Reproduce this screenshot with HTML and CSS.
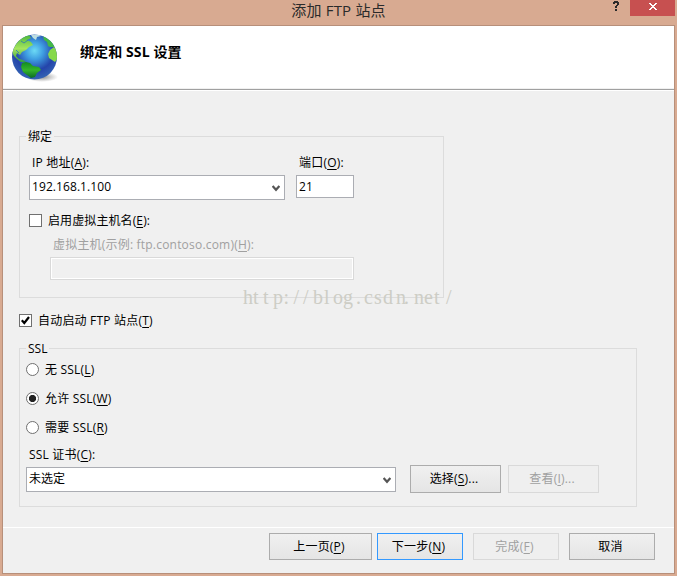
FILE: index.html
```html
<!DOCTYPE html>
<html lang="zh-CN">
<head>
<meta charset="utf-8">
<title>添加 FTP 站点</title>
<link rel="stylesheet" href="styles.css">
</head>
<body>
<div class="window">
  <header class="titlebar">
    <span class="title">添加 FTP 站点</span>
    <div class="caption">
      <svg class="help" width="8" height="12" viewBox="0 0 8 12" shape-rendering="crispEdges"><path fill="#2a2a2a" d="M1 0H5V1H6V4H5V5H4V7H2V5H3V4H4V2H2V3H0V1H1ZM2 8H4V10H2Z"/></svg>
      <span class="close"><svg width="8" height="7" viewBox="0 0 8 7" shape-rendering="crispEdges"><path fill="#fff" d="M0 0H2V1H3V2H5V1H6V0H8V1H7V2H6V3H5V4H6V5H7V6H8V7H6V6H5V5H3V6H2V7H0V6H1V5H2V4H3V3H2V2H1V1H0Z"/></svg></span>
    </div>
  </header>
  <main class="client">
    <section class="banner">
      <svg class="globe" width="50" height="50" viewBox="0 0 50 50">
        <defs>
          <radialGradient id="sea" cx="50%" cy="36%" r="64%"><stop offset="0" stop-color="#6cdaf5"/><stop offset=".3" stop-color="#3f9fe2"/><stop offset=".68" stop-color="#2444aa"/><stop offset="1" stop-color="#3464b4"/></radialGradient>
          <linearGradient id="north" x1="0" y1="0" x2="0" y2="1"><stop offset="0" stop-color="#4cb83c"/><stop offset=".5" stop-color="#a5e45e"/><stop offset="1" stop-color="#35a040"/></linearGradient>
          <linearGradient id="south" x1="0" y1="0" x2="0" y2="1"><stop offset="0" stop-color="#128a20"/><stop offset=".5" stop-color="#35b52b"/><stop offset="1" stop-color="#0a6a25"/></linearGradient>
          <radialGradient id="shade"><stop offset="0" stop-color="#555" stop-opacity=".7"/><stop offset="1" stop-color="#777" stop-opacity="0"/></radialGradient>
          <clipPath id="disc"><circle cx="23.5" cy="24" r="22.5"/></clipPath>
        </defs>
        <ellipse cx="31" cy="44" rx="16" ry="5" fill="url(#shade)"/>
        <circle cx="23.5" cy="24" r="22.5" fill="url(#sea)"/>
        <g clip-path="url(#disc)">
          <path fill="url(#north)" d="M1 19L4 12L11 4L18 2L20 5L16 7L20 9L22 12L18 14L15 17L11 19L9 22L6 20L5 23L8 26L12 27L15 29L10 29L6 26L3 23Z"/>
          <path fill="url(#south)" d="M11 30L15 29L19 30L22 33L28 34L30 37L26 40L24 44L20 45L16 42L12 39L10 34Z"/>
          <path fill="#43b846" d="M32 3L37 5L41 9L44 14L39 14L37 13L36 9L33 7Z"/>
          <path fill="#86d94b" d="M39 17L43 14L46 18L47 25L44 29L41 27L38 25L37 21Z"/>
          <path fill="#d5f1e5" opacity=".85" d="M20 2L28 1L30 3L26 4L25 7L22 5Z"/>
          <path fill="none" stroke="#2b76b8" stroke-width=".8" d="M10 8L13 10L17 7M5 17L8 20"/>
        </g>
      </svg>
      <h1>绑定和 SSL 设置</h1>
    </section>
    <section class="page">
      <div class="group binding">
        <div class="legend">绑定</div>
        <div class="address">
          <label class="ip-label">IP 地址(<u>A</u>):</label>
          <label class="port-label">端口(<u>O</u>):</label>
          <div class="combo"><span class="digits">192.168.1.100</span><svg class="arrow" width="8" height="7" viewBox="0 0 8 7"><path fill="none" stroke="#555" stroke-width="2.2" d="M.6 1L4 4.8L7.4 1"/></svg></div>
          <div class="field"><span class="digits">21</span></div>
        </div>
        <div class="check host"><span class="box"></span><span class="t-host">启用虚拟主机名(<u>E</u>):</span></div>
        <div class="hint">虚拟主机(示例: ftp.contoso.com)(<u>H</u>):</div>
        <div class="field disabled"></div>
        <svg class="watermark" width="214" height="24" viewBox="0 0 214 24"><text y="17" x="0 10 20 30 40.5 50.5 60 70 81 90 100 113 121 131 140 153 161 171 181 191 203">http://blog.csdn.net/</text></svg>
      </div>
      <div class="check auto"><span class="box"><svg width="11" height="11" viewBox="0 0 11 11"><path d="M1.8 5.2L4.3 8L9 2" fill="none" stroke="#000" stroke-width="2.2"/></svg></span><span class="t-auto">自动启动 FTP 站点(<u>T</u>)</span></div>
      <div class="group ssl">
        <div class="legend">SSL</div>
        <div class="radio"><span class="dot"></span><span>无 SSL(<u>L</u>)</span></div>
        <div class="radio on"><span class="dot"></span><span>允许 SSL(<u>W</u>)</span></div>
        <div class="radio"><span class="dot"></span><span>需要 SSL(<u>R</u>)</span></div>
        <label class="cert-label">SSL 证书(<u>C</u>):</label>
        <div class="cert">
          <div class="combo"><span class="value">未选定</span><svg class="arrow" width="8" height="7" viewBox="0 0 8 7"><path fill="none" stroke="#555" stroke-width="2.2" d="M.6 1L4 4.8L7.4 1"/></svg></div>
          <div class="button pick">选择(<u>S</u>)...</div>
          <div class="button off">查看(<u>I</u>)...</div>
        </div>
      </div>
    </section>
    <footer class="actions">
      <div class="button prev">上一页(<u>P</u>)</div>
      <div class="button next">下一步(<u>N</u>)</div>
      <div class="button off">完成(<u>F</u>)</div>
      <div class="button">取消</div>
    </footer>
  </main>
</div>
</body>
</html>
```
FILE: styles.css
```css
* { box-sizing: border-box; }
body { margin: 0; background: #d8aa91; color: #000; font: 12px/16px "Open Sans", "Noto Sans CJK SC", sans-serif; letter-spacing: 0.2px; }
u { text-underline-offset: 2px; text-decoration-thickness: 1px; text-decoration-skip-ink: none; }
svg { display: block; flex: none; }
.window { width: 677px; height: 576px; overflow: hidden; display: flex; flex-direction: column; padding: 0 2px; }
.titlebar { height: 25px; flex: none; display: grid; grid-template-columns: 1fr auto; }
.title { grid-area: 1 / 1 / 2 / 3; justify-self: center; font-size: 15px; line-height: 20px; letter-spacing: 0.2px; color: #2a2a2a; }
.caption { grid-area: 1 / 2; display: flex; align-items: flex-start; gap: 9px; }
.help { margin-top: 1px; }
.close { width: 45px; height: 16px; background: #c75050; display: flex; justify-content: center; padding-top: 3px; }
.client { height: 549px; flex: none; border: 1px solid #b78f7a; background: #f0f0f0; display: flex; flex-direction: column; }
.banner { height: 62px; flex: none; background: #fff; display: flex; padding: 7px 0 0 8px; }
.banner h1 { margin: 10px 0 0 19px; font-size: 14px; line-height: 18px; font-weight: 700; letter-spacing: 0.1px; white-space: nowrap; }
.page { height: 439px; flex: none; margin-top: 1px; border-top: 1px solid #a0a0a0; border-bottom: 1px solid #fff; padding: 46px 0 0 16px; box-shadow: inset 0 1px #fff; }
.group { border: 1px solid #dcdcdc; display: flex; flex-direction: column; }
.binding { width: 425px; height: 162px; position: relative; }
.legend { align-self: flex-start; height: 16px; margin: -8px 0 0 6px; padding: 0 2px; background: #f0f0f0; letter-spacing: 0; }
.address { display: grid; grid-template-columns: 256px 58px; column-gap: 11px; align-items: start; margin: 10px 0 0 9px; }
.address label { height: 20px; padding-left: 3px; }
.combo, .field { border: 1px solid #abadb3; background: #fff; height: 25px; padding: 0 4px 2px 2px; display: flex; align-items: center; justify-content: space-between; }
.field { height: 23px; padding-bottom: 0; }
.arrow { margin-top: 3px; }
.digits { letter-spacing: 0.08px; }
.value { letter-spacing: 0; }
.check { display: flex; align-items: center; gap: 6px; height: 16px; }
.box { width: 13px; height: 13px; margin-bottom: 2px; border: 1px solid #707070; background: #fff; }
.host { margin: 13px 0 0 9px; letter-spacing: 0.1px; }
.hint { margin: 8px 0 0 33px; color: #a0a0a0; height: 16px; }
.disabled { width: 304px; margin: 4px 0 0 30px; background: #f0f0f0; border-color: #d9d9d9; box-shadow: inset 0 0 0 1px #fff; }
.watermark { position: absolute; left: 223px; top: 150px; letter-spacing: 0; }
.watermark text { font: 20px "Liberation Serif", serif; fill: #cdcdc5; }
.auto { margin: 15px 0 0; }
.ssl { width: 618px; height: 159px; margin-top: 19px; }
.radio { display: flex; align-items: center; gap: 6px; height: 16px; margin: 5px 0 8px 6px; }
.dot { width: 13px; height: 13px; margin-bottom: 2px; border: 1px solid #707070; border-radius: 50%; background: #fff; }
.on .dot { background: radial-gradient(circle, #222 3.2px, #fff 4px); }
.ssl .radio + .radio { margin-top: 5px; }
.cert-label { margin: 3px 0 0 9px; height: 16px; }
.cert { display: flex; margin: 2px 0 0 6px; }
.cert .combo { width: 370px; margin-top: 2px; }
.button { width: 91px; height: 28px; border: 1px solid #acacac; background: linear-gradient(#f0f0f0, #e5e5e5); display: flex; align-items: center; justify-content: center; white-space: pre; padding-right: 3px; }
.pick { margin: 0 7px 0 14px; }
.off { color: #a0a0a0; border-color: #d9d9d9; background: #efefef; }
.actions { display: flex; padding: 5px 0 0 266px; }
.actions .button { width: 86px; height: 27px; margin-right: 10px; }
.actions .prev { width: 103px; margin-right: 5px; }
.actions .next { border-color: #3399ff; }
```
